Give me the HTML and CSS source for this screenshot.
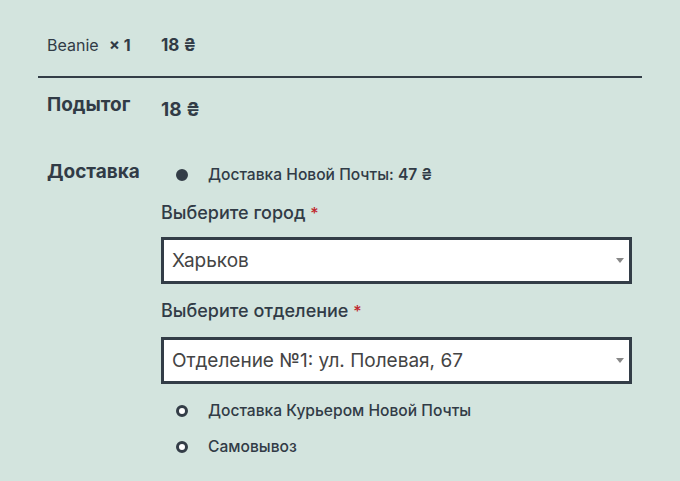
FILE: index.html
```html
<!DOCTYPE html>
<html lang="ru">
<head>
<meta charset="utf-8">
<link rel="stylesheet" href="styles.css">
</head>
<body>
<div class="summary">
  <div class="row item">
    <div class="label name">Beanie <strong class="qty">×&nbsp;1</strong></div>
    <div class="value price">18&nbsp;₴</div>
  </div>
  <div class="row subtotal">
    <div class="label head">Подытог</div>
    <div class="value total">18&nbsp;₴</div>
  </div>
  <div class="row shipping">
    <div class="label head">Доставка</div>
    <div class="value methods">
      <div class="method">
        <span class="radio checked"></span>
        <span class="method-text">Доставка Новой Почты: <b>47&nbsp;₴</b></span>
      </div>
      <div class="field">
        <div class="field-label">Выберите город <span class="req">*</span></div>
        <div class="select"><span>Харьков</span><span class="arrow"></span></div>
      </div>
      <div class="field">
        <div class="field-label">Выберите отделение <span class="req">*</span></div>
        <div class="select"><span>Отделение №1: ул. Полевая, 67</span><span class="arrow"></span></div>
      </div>
      <div class="method">
        <span class="radio"></span>
        <span class="method-text">Доставка Курьером Новой Почты</span>
      </div>
      <div class="method">
        <span class="radio"></span>
        <span class="method-text">Самовывоз</span>
      </div>
    </div>
  </div>
</div>
</body>
</html>
```
FILE: styles.css
```css
html, body {
  margin: 0;
  padding: 0;
  background: #d3e4de;
  height: 100%;
}
body {
  font-family: Inter, "Liberation Sans", Arial, sans-serif;
  color: #313b46;
}
.summary {
  margin-left: 38px;
  width: 604px;
}
.row {
  display: grid;
  grid-template-columns: 123px 1fr;
  align-items: start;
}
.label {
  padding-left: 9px;
}
.item {
  box-sizing: border-box;
  height: 78px;
  border-bottom: 2px solid #333d47;
  padding-top: 35px;
  font-size: 16px;
  line-height: 20px;
}
.qty {
  font-weight: 700;
  margin-left: 6px;
}
.price {
  font-weight: 700;
  font-size: 17px;
}
.subtotal {
  box-sizing: border-box;
  height: 83px;
  padding-top: 16px;
}
.head {
  font-weight: 700;
  font-size: 19px;
  line-height: 22px;
}
.total {
  font-weight: 700;
  font-size: 19px;
  line-height: 22px;
  padding-top: 5px;
}
.methods {
  display: flex;
  flex-direction: column;
  padding-top: 1px;
}
.method {
  display: flex;
  align-items: center;
  padding-left: 15px;
  height: 24px;
  font-size: 15.6px;
  font-weight: 500;
}
.method + .method {
  margin-top: 12px;
}
.field + .method {
  margin-top: 14px;
}
.radio {
  width: 12px;
  height: 12px;
  border-radius: 50%;
  box-sizing: border-box;
  border: 3px solid #333d47;
  background: #fff;
  margin-right: 20px;
  margin-top: 2px;
  flex: none;
}
.radio.checked {
  background: #333d47;
}
.method-text b {
  font-weight: 600;
}
.field {
  display: flex;
  flex-direction: column;
  margin-top: 16px;
}
.field-label {
  font-size: 18px;
  font-weight: 500;
  line-height: 22px;
  margin-bottom: 13px;
}
.field + .field .field-label {
  margin-bottom: 15px;
}
.req {
  color: #c0272d;
  font-size: 16px;
}
.select {
  width: 471px;
  height: 47px;
  box-sizing: border-box;
  border: 3px solid #333d47;
  background: #fff;
  display: flex;
  align-items: center;
  justify-content: space-between;
  padding: 0 5px 0 8px;
  font-size: 19px;
  color: #444;
}
.arrow {
  width: 0;
  height: 0;
  border-left: 4px solid transparent;
  border-right: 4px solid transparent;
  border-top: 5px solid #888;
}
```
